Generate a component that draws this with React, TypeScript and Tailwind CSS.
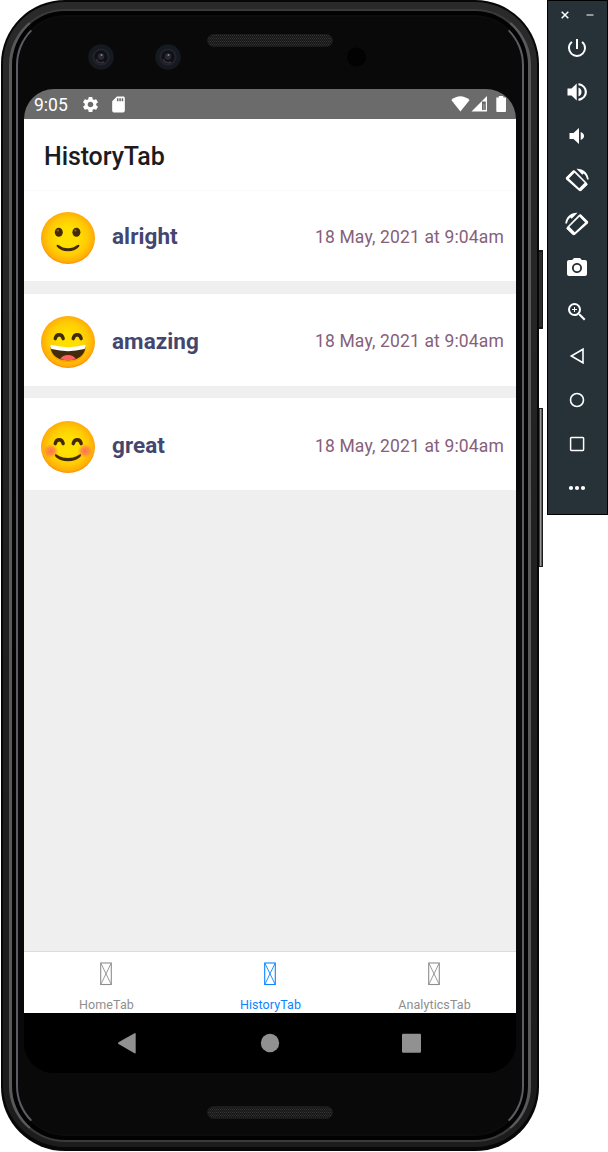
import type { ReactNode } from 'react';
import { MdPowerSettingsNew, MdPhotoCamera, MdZoomIn, MdSettings, MdSdCard } from 'react-icons/md';

type Mood = 'alright' | 'amazing' | 'great';

const entries: { mood: Mood; date: string }[] = [
  { mood: 'alright', date: '18 May, 2021 at 9:04am' },
  { mood: 'amazing', date: '18 May, 2021 at 9:04am' },
  { mood: 'great', date: '18 May, 2021 at 9:04am' },
];

function Face({ mood }: { mood: Mood }) {
  return (
    <svg className="block h-[54px] w-[56px] shrink-0" viewBox="0 0 56 54">
      <defs>
        <radialGradient id={`skin-${mood}`} cx="50%" cy="48%" r="52%">
          <stop offset="0.35" stopColor="#ffdf00" />
          <stop offset="0.7" stopColor="#ffca04" />
          <stop offset="0.93" stopColor="#ffac08" />
          <stop offset="1" stopColor="#fb8c05" />
        </radialGradient>
        <radialGradient id="blush">
          <stop offset="0" stopColor="#ff7555" />
          <stop offset="0.5" stopColor="#ff7a50" stopOpacity="0.75" />
          <stop offset="1" stopColor="#ff8a30" stopOpacity="0" />
        </radialGradient>
      </defs>
      <ellipse cx="28" cy="27" rx="27" ry="26" fill={`url(#skin-${mood})`} />
      {mood === 'alright' && (
        <>
          <ellipse cx="18.8" cy="21.2" rx="4" ry="4.5" fill="#422b0d" />
          <ellipse cx="36.4" cy="21.2" rx="4" ry="4.5" fill="#422b0d" />
          <ellipse cx="17.8" cy="19.5" rx="1.3" ry="1.1" fill="#896024" />
          <ellipse cx="35.4" cy="19.5" rx="1.3" ry="1.1" fill="#896024" />
          <path d="M17.400 33.700C19 33.500 21.500 37.200 28 37.200S37 33.500 38.600 33.700C39.700 34 39.500 35 39 35.700C36.800 38.400 33.200 40.300 28 40.300S19.200 38.400 17 35.700C16.500 35 16.300 34 17.400 33.700Z" fill="#422b0d" />
        </>
      )}
      {mood !== 'alright' && (
        <path
          d="M15.200 23.700C15.800 20.900 17.400 19.800 19.200 19.800S22.600 20.900 23.200 23.700M33.200 23.700C33.800 20.900 35.400 19.800 37.200 19.800S40.600 20.900 41.200 23.700"
          fill="none"
          stroke="#422b0d"
          strokeWidth="3.400"
          strokeLinecap="round"
        />
      )}
      {mood === 'amazing' && (
        <>
          <path d="M10 30C9.400 40 16 47 28 47S46.600 40 46 30Q28 36 10 30Z" fill="#f6a000" />
          <path d="M10.500 31.500C11.100 40.600 18 45.300 28 45.300S44.900 40.600 45.500 31.500Q28 36 10.500 31.500Z" fill="#422b0d" />
          <path d="M20.300 44.100C21.600 41 24.600 40 28 40S34.400 41 35.700 44.100Q28 46.500 20.300 44.100Z" fill="#ff5f63" />
          <path d="M11 29.800Q28 34.500 45 29.800C46.200 29.800 45.800 33.300 44.400 34.100Q28 38.200 11.600 34.100C10.200 33.300 9.800 29.800 11 29.800Z" fill="#fff" />
        </>
      )}
      {mood === 'great' && (
        <>
          <ellipse cx="10.800" cy="31" rx="7.500" ry="7" fill="url(#blush)" />
          <ellipse cx="45.200" cy="31" rx="7.500" ry="7" fill="url(#blush)" />
          <path d="M15.400 34.300C17 33.600 19.200 38 28 38S39 33.600 40.600 34.300C42.600 35.400 38.300 41.200 28 41.200S13.400 35.400 15.400 34.300Z" fill="#422b0d" />
        </>
      )}
    </svg>
  );
}

function Mesh({ id }: { id: string }) {
  return (
    <pattern id={id} width="2" height="3" patternUnits="userSpaceOnUse">
      <rect width="2" height="3" fill="#171717" />
      <rect width="1" height="1" fill="#363636" />
      <rect x="1" y="1.500" width="1" height="1" fill="#303030" />
    </pattern>
  );
}

function Lens({ cx }: { cx: number }) {
  return (
    <g>
      <circle cx={cx} cy="40" r="12.800" fill="#141a20" />
      <circle cx={cx} cy="40" r="8.600" fill="#23252a" />
      <circle cx={cx} cy="40" r="6.700" fill="#101116" />
      <path d={`M${cx - 5} 42a5.500 5.500 0 0 0 8 3`} stroke="#34343a" strokeWidth="1.500" fill="none" />
      <circle cx={cx} cy="39.500" r="3.200" fill="#292a35" />
      <circle cx={cx + 0.5} cy="38" r="1" fill="#85858c" />
    </g>
  );
}

function TopBezel() {
  return (
    <svg className="block h-[72px] w-[492px]" viewBox="0 0 492 72">
      <defs><Mesh id="mesh-top" /></defs>
      <rect x="183.500" y="17.500" width="125" height="12" rx="6" fill="url(#mesh-top)" stroke="#1b1b1b" />
      <Lens cx={77} />
      <Lens cx={144} />
      <circle cx="332.500" cy="40" r="9.500" fill="#020203" />
    </svg>
  );
}

function BottomBezel() {
  return (
    <svg className="block h-[61px] w-[492px]" viewBox="0 0 492 61">
      <defs><Mesh id="mesh-bottom" /></defs>
      <rect x="183.500" y="33.500" width="125" height="12" rx="6" fill="url(#mesh-bottom)" stroke="#1b1b1b" />
    </svg>
  );
}

function StatusBar() {
  return (
    <div className="flex h-[30px] shrink-0 items-center bg-[#6b6b6b] pl-[10px] pr-[10px] text-white">
      <span className="w-[47px] pt-[3px] text-[17.5px] leading-none">9:05</span>
      <MdSettings className="size-[19px]" />
      <MdSdCard className="ml-[8px] h-[19px] w-[21px]" />
      <span className="grow" />
      <svg className="h-[18px] w-[56px]" viewBox="0 0 56 18">
        <path d="M1.300 5Q10.300-2.500 19.600 5L10.400 16.500Z" fill="#fff" />
        <path d="M37 1V16.500H21.500Z" fill="#fff" />
        <path d="M32 6.500H35.800V15H32Z" fill="#6b6b6b" />
        <path d="M33 9H34.800V15H33Z" fill="#8a8a8a" />
        <path d="M46.300 2.500h2.500V1h4.500v1.500H56V16q0 1-1 1h-7.700q-1 0-1-1Z" fill="#fff" />
      </svg>
    </div>
  );
}

function Tab({ label, active = false }: { label: string; active?: boolean }) {
  return (
    <div className={`flex flex-1 flex-col items-center pt-[10px] ${active ? 'text-[#0a84ff]' : 'text-[#8e8e8f]'}`}>
      <svg className="h-[24px] w-[12px]" viewBox="0 0 12 24" fill="none" stroke="currentColor">
        <rect x="0.700" y="1" width="10.600" height="21.500" strokeWidth="1.100" />
        <path d="M1 1.500L11 22M11 1.500L1 22" strokeWidth="0.900" />
      </svg>
      <span className="mt-[11px] pl-px text-[12.5px] leading-[15px] tracking-[0.08px]">{label}</span>
    </div>
  );
}

function Screen() {
  return (
    <div className="flex h-[984px] w-[492px] flex-col overflow-hidden rounded-[30px] bg-black">
      <StatusBar />
      <header className="flex h-[72px] shrink-0 items-center border-b border-[#fafafa] bg-white pl-[20px] pt-[3px]">
        <h1 className="text-[25px] font-medium leading-none tracking-[-0.1px] text-[#1c1c1e]">HistoryTab</h1>
      </header>
      <main className="flex grow flex-col gap-[12.5px] bg-[#efefef]">
        {entries.map((e, i) => (
          <article
            key={e.mood}
            className={`flex shrink-0 items-center bg-white pl-[16px] pr-[12px] ${i === 0 ? 'h-[90px]' : 'h-[92px] pt-[2px]'}`}
          >
            <div className="pt-[3px]"><Face mood={e.mood} /></div>
            <span className="ml-[16px] grow pt-px text-[22.5px] font-bold leading-none tracking-[0.07px] text-[#43466f]">{e.mood}</span>
            <span className="pt-[3px] text-[17.5px] leading-none tracking-[0.15px] text-[#86607a]">{e.date}</span>
          </article>
        ))}
      </main>
      <nav className="flex h-[62px] shrink-0 border-t border-[#dcdcdc] bg-white">
        <Tab label="HomeTab" />
        <Tab label="HistoryTab" active />
        <Tab label="AnalyticsTab" />
      </nav>
      <svg className="block h-[60px] w-[492px] shrink-0 bg-black" viewBox="0 0 492 60" fill="#919191">
        <path d="M94.500 29.300L110.500 20.200Q111.700 19.700 111.700 21V39.500Q111.700 40.800 110.500 40.200L94.500 31Q93.300 30.200 94.500 29.300Z" />
        <circle cx="246" cy="30" r="9.200" />
        <rect x="378" y="20.800" width="19" height="19" rx="1.200" />
      </svg>
    </div>
  );
}

function Phone() {
  return (
    <div className="ml-px h-[1151px] w-[538px] shrink-0 rounded-[64px] bg-[#070707] px-[2px] pb-[4px] pt-[2px]">
      <div className="h-full rounded-[62px] bg-linear-to-b from-[#2a2a2a] via-[#202020] to-[#1c1c1c] px-[6px] pb-[5px] pt-[7px]">
        <div className="h-full rounded-[56px] border-x-[3px] border-y-2 border-x-[#595959] border-y-[#3a3a3a] bg-[#020202] px-[4px] pb-[4px] pt-[4px]">
          <div className="h-full rounded-[50px] border-2 border-x-[#5c5c63] border-y-[#0c0c0d] bg-[#090909] px-[6px]">
            <TopBezel />
            <Screen />
            <BottomBezel />
          </div>
        </div>
      </div>
    </div>
  );
}

function Tool({ children }: { children: ReactNode }) {
  return <div className="flex h-[44px] w-[58px] items-center justify-center">{children}</div>;
}

function Rotate({ flip = false }: { flip?: boolean }) {
  return (
    <svg className={`size-[24px] ${flip ? '-scale-x-100' : ''}`} viewBox="0 0 24 24" fill="#fff">
      <path
        fillRule="evenodd"
        d="M1.200 9.500L8 2.700Q9 1.800 10 2.700L22 15Q22.700 16 22 17L16 22.800Q15 23.700 14 22.800L1.200 11.500Q0.300 10.500 1.200 9.500ZM3.900 10.600L14.200 20.200L19.600 14.800L9.500 4.800Z"
      />
      <path d="M1.500 10.500L9 3M15 22.500L22 15.800" stroke="#fff" strokeWidth="2.200" />
      <path d="M11.500 0.800C18 0.500 23.300 5 23.700 11.500H22C21.600 8.700 20.400 6.900 18.700 5.400L17.300 6.700Z" />
    </svg>
  );
}

function Toolbar() {
  return (
    <aside className="ml-[4px] flex h-[515px] w-[61px] flex-col border border-black bg-[#273238] text-white">
      <svg className="h-[25px] w-[59px] shrink-0" viewBox="0 0 59 25" fill="none">
        <path d="M13.700 10.700L20.300 17.300M20.300 10.700L13.700 17.300" stroke="#fff" strokeWidth="1.500" />
        <path d="M38.500 14H45.500" stroke="#a0a5a8" strokeWidth="1.800" />
      </svg>
      <Tool><MdPowerSettingsNew className="size-[24px]" /></Tool>
      <Tool>
        <svg className="size-[24px]" viewBox="0 0 24 24" fill="#fff">
          <path d="M2.500 8.500H6.500L11.700 3.500V20.500L6.500 15.500H2.500ZM13.500 7.500C17.500 9 17.500 15 13.500 16.500Z" />
          <path d="M13.500 4.200C23.300 6 23.300 18 13.500 19.800" fill="none" stroke="#fff" strokeWidth="2.200" />
        </svg>
      </Tool>
      <Tool>
        <svg className="size-[24px]" viewBox="0 0 24 24" fill="#fff">
          <path d="M4.500 9H8.500L14 4V20L8.500 15H4.500ZM15.700 8C20.200 9.500 20.200 14.500 15.700 16Z" />
        </svg>
      </Tool>
      <Tool><Rotate /></Tool>
      <Tool><Rotate flip /></Tool>
      <Tool><MdPhotoCamera className="size-[24px]" /></Tool>
      <Tool><MdZoomIn className="size-[24px]" /></Tool>
      <Tool>
        <svg className="size-[24px]" viewBox="0 0 24 24" fill="none" stroke="#fff" strokeWidth="1.600">
          <path d="M18 5.200V18.800L6.300 12Z" />
        </svg>
      </Tool>
      <Tool>
        <svg className="size-[24px]" viewBox="0 0 24 24" fill="none" stroke="#fff" strokeWidth="1.600">
          <circle cx="12" cy="12" r="6.500" />
        </svg>
      </Tool>
      <Tool>
        <svg className="size-[24px]" viewBox="0 0 24 24" fill="none" stroke="#fff" strokeWidth="1.500">
          <rect x="5.600" y="5.400" width="13" height="13" rx="0.800" />
        </svg>
      </Tool>
      <Tool>
        <svg className="size-[24px]" viewBox="0 0 24 24" fill="#fff">
          <circle cx="6" cy="12" r="2.100" /><circle cx="12" cy="12" r="2.100" /><circle cx="18" cy="12" r="2.100" />
        </svg>
      </Tool>
    </aside>
  );
}

export default function App() {
  return (
    <div className="flex h-[1152px] w-[608px] items-start overflow-hidden bg-white font-['Roboto',sans-serif]">
      <Phone />
      <div className="flex w-[4px] shrink-0 flex-col pt-[250px]">
        <div className="h-[79px] rounded-r-[1px] border-y-2 border-r border-[#151515] bg-[#2c2c2c]" />
        <div className="mt-[79px] h-[159px] rounded-r-[1px] border-y border-r border-[#1b1b1b] bg-linear-to-r from-[#161616] via-[#999999] to-[#444444]" />
      </div>
      <Toolbar />
    </div>
  );
}
